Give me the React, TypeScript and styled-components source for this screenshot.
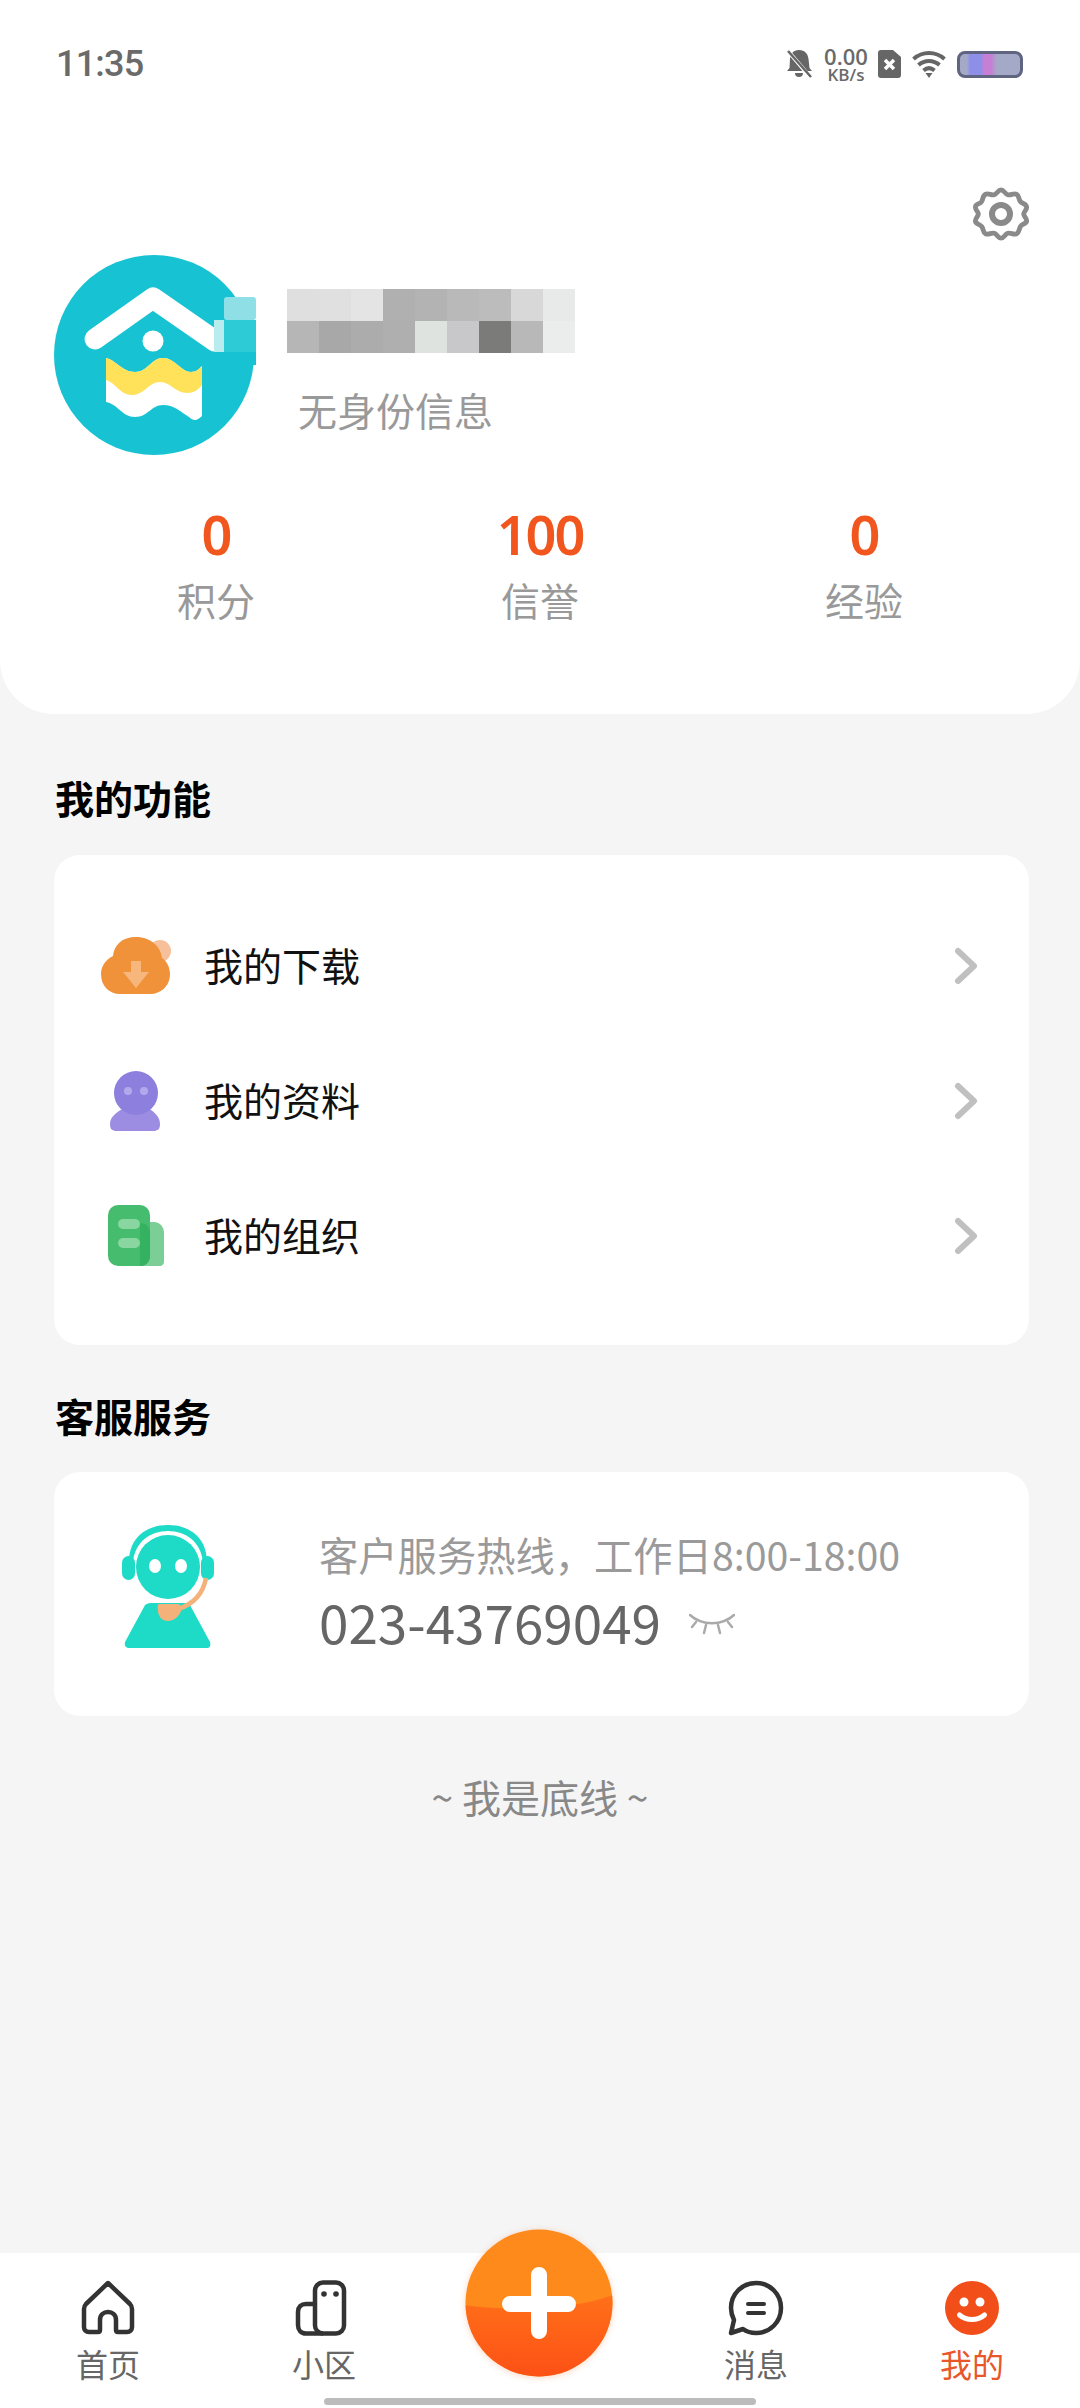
import React from 'react';
import styled, { createGlobalStyle } from 'styled-components';

const GlobalStyle = createGlobalStyle`
  html, body {
    margin: 0;
    padding: 0;
    background: #f5f5f5;
  }
  * {
    box-sizing: border-box;
  }
`;

const cjk = `"Noto Sans CJK SC", "Noto Sans", sans-serif`;

const Page = styled.div`
  position: relative;
  width: 1080px;
  height: 2408px;
  display: flex;
  flex-direction: column;
  overflow: hidden;
  background: #f5f5f5;
  font-family: ${cjk};
`;

const Header = styled.header`
  height: 714px;
  background: #fff;
  border-radius: 0 0 54px 54px;
`;

const StatusBar = styled.div`
  height: 128px;
  padding: 0 57px 0 56px;
  display: flex;
  align-items: center;
  justify-content: space-between;
  color: #6a6a6a;
`;

const Clock = styled.span`
  font-family: Roboto, sans-serif;
  font-size: 36px;
  font-weight: 500;
  letter-spacing: -0.8px;
  line-height: 40px;
`;

const StatusIcons = styled.div`
  display: flex;
  align-items: center;
`;

const NetSpeed = styled.div`
  width: 48px;
  margin: 0 8px 0 9px;
  display: flex;
  flex-direction: column;
  align-items: center;
  font-family: "Open Sans", sans-serif;
  font-weight: 600;
`;

const SpeedValue = styled.span`
  font-size: 22px;
  line-height: 20px;
`;

const SpeedUnit = styled.span`
  margin-top: 1px;
  font-size: 17px;
  line-height: 16px;
`;

const Battery = styled.div`
  width: 66px;
  height: 27px;
  margin-left: 11px;
  border: 3px solid #5f6480;
  border-radius: 8px;
  background: linear-gradient(
    90deg,
    #a5a9c8 0 7px,
    #8d8fe8 10px 21px,
    #c57fd4 24px 31px,
    #a5a9c8 37px
  );
`;

const SettingsRow = styled.div`
  margin-top: 58px;
  padding-right: 51px;
  display: flex;
  justify-content: flex-end;
  height: 56px;
`;

const Profile = styled.div`
  margin-top: 8px;
  padding-left: 50px;
  display: flex;
  gap: 27px;
  height: 210px;
`;

const ProfileText = styled.div`
  padding-top: 39px;
`;

const Mosaic = styled.div`
  display: grid;
  grid-template-columns: repeat(9, 32px);
  grid-auto-rows: 32px;
`;

const MosaicCell = styled.div<{ $shade: string }>`
  background: ${(p) => p.$shade};
`;

const Identity = styled.div`
  margin: 28px 0 0 11px;
  font-size: 39px;
  line-height: 56px;
  color: #999;
`;

const Stats = styled.div`
  margin-top: 44px;
  padding: 0 54px;
  display: grid;
  grid-template-columns: repeat(3, 1fr);
`;

const Stat = styled.div`
  display: flex;
  flex-direction: column;
  align-items: center;
`;

const StatValue = styled.span`
  font-family: "Noto Sans", sans-serif;
  font-size: 54px;
  font-weight: 600;
  letter-spacing: -2px;
  line-height: 60px;
  color: #f2561f;
`;

const StatLabel = styled.span`
  margin-top: 10px;
  font-size: 39px;
  line-height: 50px;
  color: #999;
`;

const SectionTitle = styled.h2<{ $top: number }>`
  margin: ${(p) => p.$top}px 0 0 55px;
  font-size: 39px;
  font-weight: 700;
  line-height: 50px;
  color: #000;
`;

const Card = styled.section`
  margin: 33px 51px 0 54px;
  background: #fff;
  border-radius: 26px;
`;

const MenuCard = styled(Card)`
  height: 490px;
  padding: 43px 50px 42px 36px;
`;

const MenuRow = styled.div`
  height: 135px;
  display: flex;
  align-items: center;
`;

const MenuIcon = styled.svg`
  width: 92px;
  height: 80px;
  margin-right: 22px;
`;

const MenuLabel = styled.span`
  flex: 1;
  padding-bottom: 4px;
  font-size: 39px;
  line-height: 50px;
  color: #111;
`;

const Chevron = styled.svg`
  width: 26px;
  height: 38px;
`;

const ServiceCard = styled(Card)`
  height: 244px;
  margin-top: 32px;
  padding: 50px 0 0 64px;
  display: flex;
`;

const AgentIcon = styled.svg`
  width: 100px;
  height: 130px;
  margin-right: 101px;
`;

const ServiceText = styled.div`
  margin-top: 4px;
`;

const Hours = styled.div`
  font-size: 39.3px;
  line-height: 56px;
  color: #9a9a9a;
  white-space: nowrap;
`;

const PhoneRow = styled.div`
  margin-top: 7px;
  display: flex;
  align-items: center;
  gap: 28px;
`;

const Phone = styled.span`
  font-size: 53px;
  line-height: 64px;
  color: #666;
`;

const EyeSlot = styled.span`
  display: flex;
  margin-top: 6px;
`;

const EndNote = styled.div`
  margin-top: 55px;
  font-size: 39px;
  line-height: 50px;
  color: #888;
  text-align: center;
`;

const TabBar = styled.nav`
  position: relative;
  margin-top: auto;
  height: 155px;
  background: #fff;
  display: grid;
  grid-template-columns: repeat(5, 216px);
`;

const Tab = styled.div`
  padding-top: 26px;
  display: flex;
  flex-direction: column;
  align-items: center;
`;

const TabIcon = styled.svg`
  width: 60px;
  height: 58px;
`;

const TabLabel = styled.span<{ $active?: boolean }>`
  margin-top: 6px;
  font-size: 32px;
  line-height: 40px;
  color: ${(p) => (p.$active ? '#e8562a' : '#666')};
`;

const AddButton = styled.svg`
  position: absolute;
  left: 464px;
  top: -25px;
  width: 150px;
  height: 150px;
  filter: drop-shadow(0 1px 3px rgba(230, 90, 20, 0.25));
`;

const HomeHandle = styled.div`
  position: absolute;
  left: 324px;
  bottom: 3px;
  width: 432px;
  height: 7px;
  border-radius: 4px;
  background: #bcbcbc;
`;

const nameShades = [
  '#dfdfdf', '#e0e0e0', '#e4e4e4', '#b0b0b0', '#b3b3b3', '#b9b9b9', '#bcbcbc', '#d8d8d8', '#e8eaea',
  '#b6b6b6', '#a8a8a8', '#acacac', '#b0afb0', '#dfe3df', '#c8c8ca', '#7b7c7a', '#b8b8b8', '#ebecec',
];

const stats = [
  { value: '0', label: '积分' },
  { value: '100', label: '信誉' },
  { value: '0', label: '经验' },
];

const BellOff = () => (
  <svg width="27" height="28" viewBox="0 0 27 28">
    <path
      d="M13 0c6 0 9 4 9.500 9l1 9 2.500 3H1l2.500-3 .5-9C4.500 4 7 0 13 0zM9 23h8a4 4 0 0 1-8 0z"
      fill="#666"
    />
    <path d="M2 1l23 27" stroke="#fff" strokeWidth="4" />
    <path d="M2 1l23 26" stroke="#666" strokeWidth="2.500" />
  </svg>
);

const SimOff = () => (
  <svg width="23" height="28" viewBox="0 0 23 28">
    <path d="M3 0h12l8 7v18a3 3 0 0 1-3 3H3a3 3 0 0 1-3-3V3a3 3 0 0 1 3-3z" fill="#666" />
    <path d="M7 10l9 9M16 10l-9 9" stroke="#fff" strokeWidth="3.500" />
  </svg>
);

const Wifi = () => (
  <svg width="34" height="27" viewBox="0 0 34 27" fill="none" stroke="#666" strokeWidth="4" style={{ marginLeft: 11 }}>
    <path d="M1.500 8c9-8 22-8 31 0" />
    <path d="M6.500 14c6-5.500 15-5.500 21 0" />
    <path d="M11.500 19.500c3.500-3 7.500-3 11 0" />
    <path d="M13.500 22h7l-3.500 5z" fill="#666" stroke="none" />
  </svg>
);

const Gear = () => (
  <svg width="56" height="56" viewBox="0 0 56 56" fill="none" stroke="#8a8a8a" strokeWidth="5" strokeLinejoin="round">
    <path d="M28 3c3 0 4 4 7 5s6-2 9-.5 2 5 4 7.500 6 2 6.500 5.500-3 5-3 7.500 3.500 4.500 3 7.500-5 2.500-6.500 5.500-1 6-4 7.500-6-1.500-9-.5-4 5-7 5-4-4-7-5-6 2-9 .5-2-5-4-7.500-6-2.500-6.500-5.500 3-5 3-7.500-3.500-4-3-7.500 5-2.500 6.500-5.500 1-6 4-7.500 6 1.500 9 .5 4-5 7-5z" transform="translate(1 1) scale(0.965)" />
    <circle cx="28" cy="28" r="9" strokeWidth="6" />
  </svg>
);

// Community logo: drawn in page-like units, 50..260 by 250..460
const Logo = () => (
  <svg width="210" height="210" viewBox="50 250 210 210">
    <circle cx="154" cy="355" r="100" fill="#17c3d2" />
    <path d="M95 339l58-41 62 43" fill="none" stroke="#fff" strokeWidth="21" strokeLinecap="round" strokeLinejoin="round" />
    <circle cx="153" cy="341" r="10.500" fill="#fff" />
    <path
      d="M106 402v-44c10 2 16 14 29 14s16-14 28-14 18 14 28 14c5 0 8-3 11-6v50c-4 4-8 6-13 1-7-4-14-12-26-12s-15 12-28 12-17-13-29-15z"
      fill="#fff"
    />
    <path
      d="M106 380v-22c10 2 16 14 29 14s16-14 28-14 18 14 28 14c5 0 8-3 11-6v19c-4 5-8 8-15 8-12 0-16-11-27-11s-16 13-28 13-16-12-26-15z"
      fill="#ffe15a"
    />
    <rect x="224" y="297" width="32" height="23" rx="3" fill="#8fe0e6" />
    <rect x="214" y="320" width="10" height="32" fill="#b8ecef" />
    <rect x="224" y="320" width="32" height="32" fill="#2ccbd6" />
    <rect x="224" y="352" width="32" height="13" fill="#17c3d2" />
  </svg>
);

const CloudIcon = () => (
  <MenuIcon viewBox="90 926 92 80">
    <circle cx="160" cy="951" r="11" fill="#f6c09a" />
    <path
      d="M136 937c15 0 25 10 26 21 5 3 8 10 8 16 0 12-9 20-20 20h-30c-11 0-19-8-19-20 0-9 6-15 12-18 1-11 9-19 23-19z"
      fill="#f0923a"
    />
    <path d="M131 961h10v11h8l-13 16-13-16h8z" fill="#f7b77c" />
  </MenuIcon>
);

const ProfileIcon = () => (
  <MenuIcon viewBox="90 1060 92 80">
    <path d="M110 1123c0-9 10-13 16-18h20c6 5 14 9 14 18 0 5-2 7-7 7h-36c-5 0-7-2-7-7z" fill="#9c8ce2" />
    <circle cx="136" cy="1092" r="22" fill="#8d7fdd" />
    <circle cx="128" cy="1090" r="4" fill="#b3a8ec" />
    <circle cx="144" cy="1090" r="4" fill="#b3a8ec" />
  </MenuIcon>
);

const GroupIcon = () => (
  <MenuIcon viewBox="90 1196 92 80">
    <path d="M140 1222h14c6 0 10 5 10 11v29c0 2-2 4-4 4h-20z" fill="#7bce95" />
    <rect x="108" y="1205" width="42" height="61" rx="10" fill="#46bc6e" />
    <path d="M140 1223c6 0 10 4 10 10v23c0 5-3 9-8 10h-2z" fill="#35b25f" />
    <rect x="118" y="1219" width="22" height="10" rx="5" fill="#8ad6a0" />
    <rect x="118" y="1238" width="22" height="10" rx="5" fill="#8ad6a0" />
  </MenuIcon>
);

const Agent = () => (
  <AgentIcon viewBox="118 1522 100 130">
    <path d="M129 1562c0-24 17-37 39-37s39 13 39 37h-4c-2-20-17-31-35-31s-33 11-35 31z" fill="#1ddbc6" />
    <rect x="122" y="1556" width="13" height="24" rx="6.500" fill="#1ddbc6" />
    <rect x="201" y="1556" width="13" height="24" rx="6.500" fill="#1ddbc6" />
    <ellipse cx="168" cy="1567" rx="32" ry="32" fill="#1ddbc6" />
    <ellipse cx="155" cy="1566" rx="6" ry="7" fill="#fff" />
    <ellipse cx="181" cy="1566" rx="6" ry="7" fill="#fff" />
    <path d="M151 1603h34c3 0 5 1 6 4l19 35c1 4 0 6-4 6h-76c-4 0-6-2-5-6l19-35c1-3 4-4 7-4z" fill="#1ddbc6" />
    <path d="M206 1578c-3 16-12 26-28 31" fill="none" stroke="#f4b27a" strokeWidth="4.500" />
    <path d="M159 1604h18c4 0 5 3 4 7-2 6-8 10-13 10-6 0-9-4-10-9 0-4-1-8 1-8z" fill="#f4b27a" />
  </AgentIcon>
);

const ClosedEye = () => (
  <svg width="46" height="22" viewBox="0 0 46 22" fill="none" stroke="#aaa" strokeWidth="2.500" strokeLinecap="round">
    <path d="M1 2c12 11 32 11 44 0" />
    <path d="M7 9l-4 5M17 12l-2 8M29 12l2 8M39 9l4 5" />
  </svg>
);

const HomeGlyph = () => (
  <TabIcon viewBox="0 0 60 58" fill="none" stroke="#333" strokeWidth="4.500" strokeLinejoin="round">
    <path d="M30 4L8 25c-1.500 1.500-2 3-2 5v18c0 3 2 5 5 5h9c1.500 0 2-1 2-2V41c0-5 3.500-8 8-8s8 3 8 8v10c0 1 .5 2 2 2h9c3 0 5-2 5-5V30c0-2-.5-3.500-2-5z" />
  </TabIcon>
);

const CommunityGlyph = () => (
  <TabIcon viewBox="0 0 60 58" fill="none" stroke="#333" strokeWidth="4.500">
    <rect x="21" y="3.500" width="29" height="51" rx="8" />
    <path d="M21 25h-9c-5 0-8 3-8 8v13c0 5 3 8.500 8 8.500h17" />
    <circle cx="30" cy="15" r="2.800" fill="#333" stroke="none" />
    <circle cx="42" cy="15" r="2.800" fill="#333" stroke="none" />
  </TabIcon>
);

const MessageGlyph = () => (
  <TabIcon viewBox="0 0 60 58" fill="none" stroke="#333" strokeWidth="4.500" strokeLinejoin="round" strokeLinecap="round">
    <path d="M30 4c14 0 25 11 25 25S44 54 30 54c-5 0-9-1-13-4L5 54l3-13c-2-4-3-8-3-12C5 15 16 4 30 4z" />
    <path d="M22 25h16M22 34h16" strokeWidth="4" />
  </TabIcon>
);

const SmileGlyph = () => (
  <TabIcon viewBox="0 0 60 58" fill="none">
    <circle cx="30" cy="29" r="27" fill="#f24e1a" />
    <circle cx="22" cy="23" r="4.500" fill="#fff" />
    <circle cx="38" cy="23" r="4.500" fill="#fff" />
    <path d="M17.500 36c7 6 18 6 25 0" stroke="#fff" strokeWidth="5" strokeLinecap="round" />
  </TabIcon>
);

const AddGlyph = () => (
  <AddButton viewBox="0 0 150 150">
    <defs>
      <clipPath id="add-disc">
        <circle cx="75" cy="75" r="73.500" />
      </clipPath>
      <linearGradient id="add-lower" x1="0" y1="0" x2="0" y2="1">
        <stop offset="0" stopColor="#ff7018" />
        <stop offset="1" stopColor="#fd5016" />
      </linearGradient>
    </defs>
    <g clipPath="url(#add-disc)">
      <rect width="150" height="150" fill="#ff8a1c" />
      <path d="M0 77c45 6 105 6 150-10v83H0z" fill="url(#add-lower)" />
    </g>
    <path d="M75 47v56M46 76h58" stroke="#fff" strokeWidth="16" strokeLinecap="round" />
  </AddButton>
);

const ChevronRight = () => (
  <Chevron viewBox="0 0 26 38" fill="none" stroke="#c0c0c0" strokeWidth="6" strokeLinecap="round" strokeLinejoin="round">
    <path d="M5 4l16 15L5 34" />
  </Chevron>
);

export default function App() {
  return (
    <Page>
      <GlobalStyle />
      <Header>
        <StatusBar>
          <Clock>11:35</Clock>
          <StatusIcons>
            <BellOff />
            <NetSpeed>
              <SpeedValue>0.00</SpeedValue>
              <SpeedUnit>KB/s</SpeedUnit>
            </NetSpeed>
            <SimOff />
            <Wifi />
            <Battery />
          </StatusIcons>
        </StatusBar>
        <SettingsRow>
          <Gear />
        </SettingsRow>
        <Profile>
          <Logo />
          <ProfileText>
            <Mosaic>
              {nameShades.map((shade, i) => (
                <MosaicCell key={i} $shade={shade} />
              ))}
            </Mosaic>
            <Identity>无身份信息</Identity>
          </ProfileText>
        </Profile>
        <Stats>
          {stats.map((s) => (
            <Stat key={s.label}>
              <StatValue>{s.value}</StatValue>
              <StatLabel>{s.label}</StatLabel>
            </Stat>
          ))}
        </Stats>
      </Header>

      <SectionTitle $top={58}>我的功能</SectionTitle>
      <MenuCard>
        <MenuRow>
          <CloudIcon />
          <MenuLabel>我的下载</MenuLabel>
          <ChevronRight />
        </MenuRow>
        <MenuRow>
          <ProfileIcon />
          <MenuLabel>我的资料</MenuLabel>
          <ChevronRight />
        </MenuRow>
        <MenuRow>
          <GroupIcon />
          <MenuLabel>我的组织</MenuLabel>
          <ChevronRight />
        </MenuRow>
      </MenuCard>

      <SectionTitle $top={45}>客服服务</SectionTitle>
      <ServiceCard>
        <Agent />
        <ServiceText>
          <Hours>客户服务热线，工作日8:00-18:00</Hours>
          <PhoneRow>
            <Phone>023-43769049</Phone>
            <EyeSlot>
              <ClosedEye />
            </EyeSlot>
          </PhoneRow>
        </ServiceText>
      </ServiceCard>

      <EndNote>~ 我是底线 ~</EndNote>

      <TabBar>
        <Tab>
          <HomeGlyph />
          <TabLabel>首页</TabLabel>
        </Tab>
        <Tab>
          <CommunityGlyph />
          <TabLabel>小区</TabLabel>
        </Tab>
        <div />
        <Tab>
          <MessageGlyph />
          <TabLabel>消息</TabLabel>
        </Tab>
        <Tab>
          <SmileGlyph />
          <TabLabel $active>我的</TabLabel>
        </Tab>
        <AddGlyph />
        <HomeHandle />
      </TabBar>
    </Page>
  );
}
